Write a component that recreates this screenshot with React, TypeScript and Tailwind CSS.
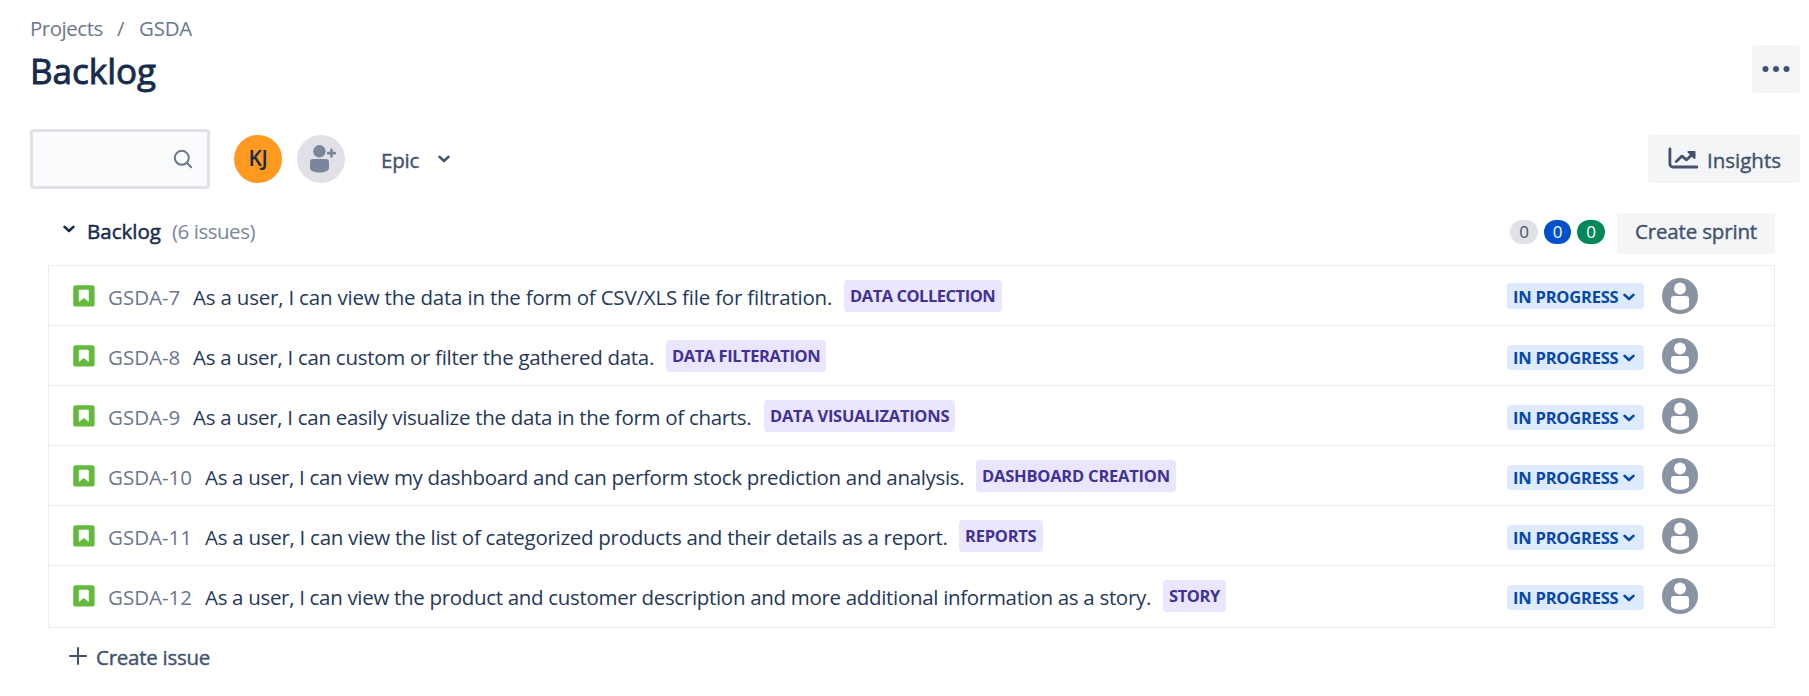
type Issue = { id: string; title: string; titleClass: string; epic: string; epicClass: string };

const issues: Issue[] = [
  {
    id: "GSDA-7",
    title: "As a user, I can view the data in the form of CSV/XLS file for filtration.",
    titleClass: "w-[651px] tracking-[-0.2px]",
    epic: "DATA COLLECTION",
    epicClass: "w-[158px] tracking-[-0.48px]",
  },
  {
    id: "GSDA-8",
    title: "As a user, I can custom or filter the gathered data.",
    titleClass: "w-[473px] tracking-[-0.29px]",
    epic: "DATA FILTERATION",
    epicClass: "w-[160px] tracking-[-0.45px]",
  },
  {
    id: "GSDA-9",
    title: "As a user, I can easily visualize the data in the form of charts.",
    titleClass: "w-[571px] tracking-[-0.3px]",
    epic: "DATA VISUALIZATIONS",
    epicClass: "w-[191px] tracking-[-0.27px]",
  },
  {
    id: "GSDA-10",
    title: "As a user, I can view my dashboard and can perform stock prediction and analysis.",
    titleClass: "w-[771px] tracking-[-0.32px]",
    epic: "DASHBOARD CREATION",
    epicClass: "w-[200px] tracking-[-0.22px]",
  },
  {
    id: "GSDA-11",
    title: "As a user, I can view the list of categorized products and their details as a report.",
    titleClass: "w-[754px] tracking-[-0.275px]",
    epic: "REPORTS",
    epicClass: "w-[84px] tracking-[-0.25px]",
  },
  {
    id: "GSDA-12",
    title: "As a user, I can view the product and customer description and more additional information as a story.",
    titleClass: "w-[958px] tracking-[-0.315px]",
    epic: "STORY",
    epicClass: "w-[63px] tracking-[-0.39px]",
  },
];

function Chevron({ className }: { className: string }) {
  return (
    <svg viewBox="0 0 12 8" className={className} fill="none" stroke="currentColor" strokeWidth="2.6" strokeLinecap="round" strokeLinejoin="round">
      <path d="M1.6 1.900 6 6l4.400-4.100" />
    </svg>
  );
}

function StoryIcon() {
  return (
    <svg viewBox="0 0 22 22" className="h-[22px] w-[22px]">
      <rect x="0.2" y="0.2" width="21.4" height="21.4" rx="2.6" fill="#63ba3c" />
      <path d="M6.800 4.800h8a1 1 0 0 1 1 1v11.200l-5-4-5 4V5.800a1 1 0 0 1 1-1Z" fill="#fff" />
    </svg>
  );
}

function UnassignedAvatar() {
  return (
    <svg viewBox="0 0 36 36" className="h-9 w-9">
      <circle cx="18" cy="18" r="18" fill="#8993a4" />
      <circle cx="18" cy="10.6" r="6" fill="#fff" />
      <path d="M12 18h12a3 3 0 0 1 3 3v6.500c0 2.600-4 4.200-9 4.200s-9-1.600-9-4.200V21a3 3 0 0 1 3-3Z" fill="#fff" />
    </svg>
  );
}

function IssueRow({ issue, first, last }: { issue: Issue; first: boolean; last: boolean }) {
  return (
    <div className={`flex items-start ${last ? "h-[61px]" : "h-[60px] border-b border-[#ebecf0]"}`}>
      <div className="pt-[19px] pl-6">
        <StoryIcon />
      </div>
      <div className={`pt-[17px] pl-[13px] leading-7 whitespace-nowrap text-[#6b778c] ${issue.id.length > 6 ? "w-[110px]" : "w-[98px]"}`}>
        {issue.id}
      </div>
      <div className={`shrink-0 pt-[17px] leading-7 whitespace-nowrap text-[#253858] ${issue.titleClass}`}>{issue.title}</div>
      <div
        className={`mt-[14px] h-8 shrink-0 rounded-[4px] bg-[#eae6ff] pl-[6px] text-[16.5px] leading-[31px] font-bold whitespace-nowrap text-[#403294] ${issue.epicClass}`}
      >
        {issue.epic}
      </div>
      <div
        className={`ml-auto flex w-[137px] items-center rounded-[4px] bg-[#deebff] pl-[6px] text-[16.5px] font-bold tracking-[-0.22px] whitespace-nowrap text-[#0747a6] ${
          first ? "mt-[17px] h-[26px] pt-[2px]" : "mt-[19px] h-[25px] pt-px"
        }`}
      >
        <span className="leading-6">IN PROGRESS</span>
        <Chevron className="ml-[5px] h-2 w-3" />
      </div>
      <div className="mr-[76px] ml-[18px] pt-3">
        <UnassignedAvatar />
      </div>
    </div>
  );
}

export default function App() {
  return (
    <main className="h-[696px] w-full overflow-hidden bg-white font-['Open_Sans',sans-serif] text-[20.5px]">
      <header className="flex h-[129px] justify-between pr-[9px] pl-[30px]">
        <div>
          <nav className="flex pt-[14px] leading-7 text-[#6b778c]">
            <span className="w-[87px] tracking-[-0.48px]">Projects</span>
            <span className="w-[22px]">/</span>
            <span className="tracking-[-0.25px]">GSDA</span>
          </nav>
          <h1 className="mt-[6px] text-[35px] leading-[46px] text-[#172b4d] [-webkit-text-stroke:0.9px]">Backlog</h1>
        </div>
        <button className="mt-[45px] flex h-12 w-12 items-center justify-center rounded-[4px] bg-[#f4f5f7] text-[#42526e]">
          <svg viewBox="0 0 28 6" className="h-[6px] w-7" fill="currentColor">
            <circle cx="3.500" cy="3" r="3" />
            <circle cx="14" cy="3" r="3" />
            <circle cx="24.500" cy="3" r="3" />
          </svg>
        </button>
      </header>

      <div className="flex h-[60px] items-center pr-[9px] pl-[30px]">
        <div className="flex h-[60px] w-[180px] items-center justify-end rounded-[4px] border-[3px] border-[#dfe1e6] bg-[#fafbfc] pr-[14px] text-[#6b778c]">
          <svg viewBox="0 0 20 20" className="h-5 w-5" fill="none" stroke="currentColor" strokeWidth="2" strokeLinecap="round">
            <circle cx="8.800" cy="8.800" r="7" />
            <path d="m14 14 4.200 4.200" />
          </svg>
        </div>
        <div className="ml-6 flex h-12 w-12 items-center justify-center rounded-full bg-[#ff991f] text-[21px] font-semibold tracking-[-0.3px] text-[#172b4d]">
          KJ
        </div>
        <div className="ml-[15px] h-12 w-12 rounded-full bg-[#dfe1e6]">
          <svg viewBox="0 0 48 48" className="h-12 w-12" fill="#7a869a">
            <circle cx="22.400" cy="16.300" r="6.200" />
            <path d="M16 24h13a3 3 0 0 1 3 3v6c0 2.800-4.300 4.500-9.500 4.500S13 35.800 13 33v-6a3 3 0 0 1 3-3Z" />
            <path d="M34.500 14.700v6.800M31.100 18.100h6.800" stroke="#7a869a" strokeWidth="2.600" strokeLinecap="round" />
          </svg>
        </div>
        <button className="ml-9 flex items-center text-[#42526e]">
          <span className="w-[57px] pt-[2px] text-left leading-7 tracking-[-0.2px] [-webkit-text-stroke:0.4px]">Epic</span>
          <Chevron className="h-2 w-3" />
        </button>
        <button className="ml-auto flex h-12 w-[152px] items-center rounded-[4px] bg-[#f4f5f7] pl-[20px] text-[#42526e]">
          <svg viewBox="0 0 30 22" className="mb-[2px] h-[22px] w-[30px]" fill="none" stroke="currentColor" strokeWidth="2.800" strokeLinecap="round" strokeLinejoin="round">
            <path d="M1.900 1.900V17a3 3 0 0 0 3 3H29" />
            <path d="m8.300 14.500 5.700-5.400 4.500 3.700 6.500-6" />
            <path d="M20.500 5h6v6Z" fill="currentColor" strokeWidth="2" />
          </svg>
          <span className="ml-[9px] pt-px leading-7 [-webkit-text-stroke:0.4px]">Insights</span>
        </button>
      </div>

      <section className="pr-[34px] pl-12">
        <div className="flex h-[76px] items-start">
          <Chevron className="mt-[36px] ml-[15px] h-2 w-3 text-[#172b4d]" />
          <h2 className="mt-7 ml-[12px] w-[85px] leading-7 text-[#172b4d] [-webkit-text-stroke:0.5px]">Backlog</h2>
          <span className="mt-7 leading-7 tracking-[-0.47px] text-[#7a869a]">(6 issues)</span>
          <div className="mt-[31px] ml-auto flex gap-[6px] text-[17px] leading-6">
            <span className="h-6 w-7 rounded-full bg-[#dfe1e6] text-center text-[#42526e]">0</span>
            <span className="h-6 w-[27px] rounded-full bg-[#0052cc] text-center text-white">0</span>
            <span className="h-6 w-7 rounded-full bg-[#00875a] text-center text-white">0</span>
          </div>
          <button className="mt-6 ml-3 h-[41px] w-[158px] rounded-b-[4px] bg-[#f4f5f7] pb-[4px] leading-[37px] tracking-[-0.16px] text-[#42526e] [-webkit-text-stroke:0.4px]">
            Create sprint
          </button>
        </div>

        <div className="border border-[#ebecf0]">
          {issues.map((issue, i) => (
            <IssueRow key={issue.id} issue={issue} first={i === 0} last={i === issues.length - 1} />
          ))}
        </div>

        <button className="mt-[15px] ml-[21px] flex items-center text-[#42526e]">
          <svg viewBox="0 0 18 18" className="mb-[2px] h-[18px] w-[18px]" fill="none" stroke="currentColor" strokeWidth="2" strokeLinecap="round">
            <path d="M9 1v16M1 9h16" />
          </svg>
          <span className="ml-[9px] leading-7 tracking-[-0.26px] [-webkit-text-stroke:0.4px]">Create issue</span>
        </button>
      </section>
    </main>
  );
}
